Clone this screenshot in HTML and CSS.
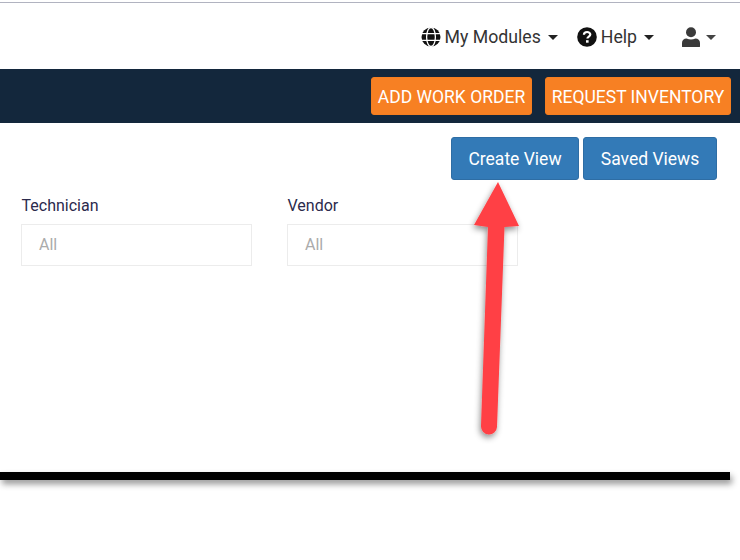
FILE: index.html
```html
<!DOCTYPE html>
<html lang="en">
<head>
<meta charset="utf-8">
<title>Work Orders</title>
<link rel="stylesheet" href="styles.css">
</head>
<body>
<div class="page">
  <header class="topnav">
    <a class="navitem modules">
      <svg class="icon" viewBox="0 0 20 20" width="20" height="20"><circle cx="10" cy="10" r="9.5" fill="#111"/><g fill="none" stroke="#fff" stroke-width="1.3"><ellipse cx="10" cy="10" rx="4.4" ry="9.5"/><path d="M0.5 6.6H19.5M0.5 13.4H19.5"/></g></svg>
      <span>My Modules</span><i class="caret"></i>
    </a>
    <a class="navitem help">
      <svg class="icon" viewBox="0 0 20 20" width="20" height="20"><circle cx="10" cy="10" r="9.8" fill="#111"/><path d="M6.9 7.7C7 5.9 8.3 5 10.1 5C11.9 5 13.3 6.1 13.3 7.6C13.3 9.6 10.4 9.7 10.4 11.6" fill="none" stroke="#fff" stroke-width="2.2"/><rect x="9" y="13.2" width="2.6" height="2.5" fill="#fff"/></svg>
      <span>Help</span><i class="caret"></i>
    </a>
    <a class="navitem user">
      <svg class="icon" viewBox="0 0 18 20" width="18" height="20"><circle cx="9" cy="5.2" r="5" fill="#3a3a3a"/><path d="M0.5 20C0 20 0 19.500 0 19V16C0 13 2 11.500 4.500 11.500C6 12.300 7.500 12.600 9 12.600C10.500 12.600 12 12.300 13.500 11.500C16 11.500 18 13 18 16V19C18 19.500 18 20 17.500 20Z" fill="#3a3a3a"/></svg>
      <i class="caret"></i>
    </a>
  </header>
  <nav class="actionbar">
    <button class="orange work">ADD WORK ORDER</button>
    <button class="orange inventory">REQUEST INVENTORY</button>
  </nav>
  <section class="viewbar">
    <button class="blue create">Create View</button>
    <button class="blue saved">Saved Views</button>
  </section>
  <section class="filters">
    <div class="field">
      <label>Technician</label>
      <div class="select">All</div>
    </div>
    <div class="field">
      <label>Vendor</label>
      <div class="select">All</div>
    </div>
  </section>
  <div class="rule"></div>
  <svg class="arrow" viewBox="0 0 740 560" width="740" height="560">
    <defs>
      <filter id="shade" x="-30%" y="-10%" width="160%" height="120%">
        <feDropShadow dx="-1" dy="3" stdDeviation="3" flood-color="#000" flood-opacity="0.45"/>
      </filter>
    </defs>
    <path filter="url(#shade)" fill="#ff4045" d="M498 182L519 226L504.500 227L497 427A8 8 0 0 1 481 426L488 227L474 225Z"/>
  </svg>
</div>
</body>
</html>
```
FILE: styles.css
```css
* {
  box-sizing: border-box;
}

html, body {
  margin: 0;
  padding: 0;
  background: #fff;
}

.page {
  position: relative;
  width: 740px;
  height: 560px;
  overflow: hidden;
  padding-top: 2px;
  font-family: Roboto, "Liberation Sans", sans-serif;
}

.page::before {
  content: "";
  display: block;
  height: 1px;
  background: #b1b3c0;
}

.topnav {
  display: flex;
  align-items: center;
  justify-content: flex-end;
  height: 66px;
  padding: 2px 24px 0 0;
  color: #333;
  font-size: 17.700px;
}

.navitem {
  display: flex;
  align-items: center;
}

.modules {
  gap: 4px;
  margin-right: 19px;
}

.help {
  gap: 4px;
  margin-right: 28px;
}

.user {
  gap: 6px;
}

.caret {
  width: 0;
  height: 0;
  margin-left: 3px;
  border-top: 5px solid #222;
  border-left: 5px solid transparent;
  border-right: 5px solid transparent;
}

.user .caret {
  margin-left: 0;
  border-top-color: #444;
}

.actionbar {
  display: flex;
  justify-content: flex-end;
  align-items: center;
  gap: 13px;
  height: 54px;
  padding: 0 9px 0 0;
  background: #13273c;
}

button {
  font-family: inherit;
  color: #fff;
  cursor: pointer;
}

.orange {
  height: 38px;
  padding: 1px 0 0;
  border: 1px solid #f57e20;
  border-radius: 3px;
  background: #f78023;
  font-size: 17.500px;
}

.work {
  width: 161px;
}

.inventory {
  width: 186px;
}

.viewbar {
  display: flex;
  justify-content: flex-end;
  gap: 4px;
  padding: 14px 23px 0 0;
}

.blue {
  height: 43px;
  padding: 0;
  border: 1px solid #2e6da4;
  border-radius: 3px;
  background: #337ab7;
  font-size: 17.500px;
}

.create {
  width: 128px;
}

.saved {
  width: 134px;
}

.filters {
  display: flex;
  gap: 35px;
  padding: 16px 0 0 21px;
}

.field {
  width: 231px;
}

.field label {
  display: block;
  height: 28px;
  padding-left: 0.500px;
  color: #2b2a4c;
  font-size: 16px;
  line-height: 19px;
}

.select {
  height: 42px;
  padding-left: 17px;
  border: 1px solid #ececec;
  background: #fff;
  color: #ababab;
  font-size: 16px;
  line-height: 39px;
}

.rule {
  width: 730px;
  height: 8px;
  margin-top: 206px;
  background: #000;
  box-shadow: 2px 4px 6px rgba(0, 0, 0, 0.42);
}

.arrow {
  position: absolute;
  top: 0;
  left: 0;
  pointer-events: none;
}
```
